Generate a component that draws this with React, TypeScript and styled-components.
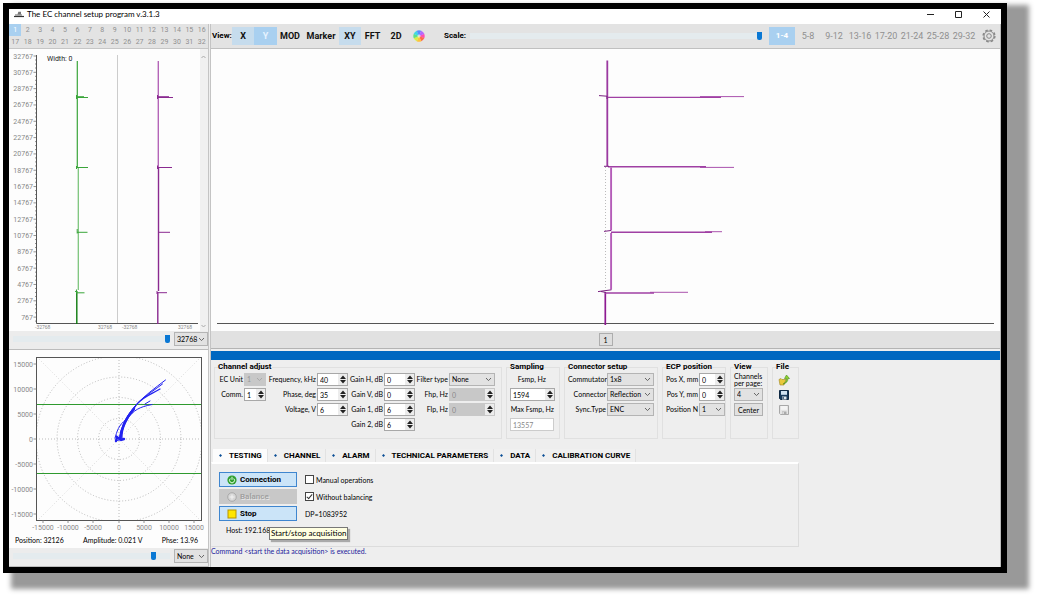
import React, { useId } from "react";
import styled, { createGlobalStyle, css } from "styled-components";

const UI_FONT = 'Lato, "Liberation Sans", sans-serif';
const BOLD_FONT = 'Roboto, "Liberation Sans", sans-serif';

const GlobalStyle = createGlobalStyle`
  *, *::before, *::after { box-sizing: border-box; }
  body { margin: 0; background: #fff; }
  body, button, input, select { font-family: ${UI_FONT}; font-size: 7px; color: #000; }
  svg { display: block; }
  svg text { font-family: ${BOLD_FONT}; }
`;

/* ---------- window ---------- */

const Page = styled.div`
  padding: 3px 32px 24px 3px;
`;

const Frame = styled.main`
  border: 6px solid #000;
  background: #eee;
  box-shadow: 15px 9px 5px 7px #999;
`;

const TitleBar = styled.header`
  display: flex;
  align-items: center;
  height: 15px;
  padding: 0 1px 5px 5px;
  background: #fff;
`;

const Title = styled.h1`
  flex: 1;
  margin: 0 0 0 3px;
  font-size: 8px;
  font-weight: 400;
  line-height: 10px;
`;

const WindowButton = styled.button`
  width: 28px;
  height: 10px;
  padding: 0;
  border: 0;
  background: none;
  display: grid;
  place-items: center;
`;

const Workspace = styled.div`
  display: grid;
  grid-template-columns: 202px minmax(0, 1fr);
`;

const Column = styled.div<{ $divider?: boolean }>`
  display: flex;
  flex-direction: column;
  min-width: 0;
  ${(p) =>
    p.$divider
      ? css`border-right: 3px double #c4c4c4;`
      : css`border-right: 1px solid #bdbdbd;`}
`;

/* ---------- left column ---------- */

const ChannelGrid = styled.nav`
  display: grid;
  grid-template-columns: repeat(16, 1fr);
  grid-auto-rows: 12px;
  height: 25px;
  background: #e3e3e3;
  border-bottom: 1px solid #c6c6c6;
`;

const ChannelButton = styled.button<{ $active?: boolean }>`
  padding: 0;
  border: 0;
  background: ${(p) => (p.$active ? "#a9d0f0" : "none")};
  color: ${(p) => (p.$active ? "#fff" : "#909090")};
  font-family: ${BOLD_FONT};
  line-height: 12px;
`;

const PlotArea = styled.section`
  background: #fdfdfd;
`;

const SliderRow = styled.div`
  display: flex;
  align-items: center;
  gap: 4px;
  height: 19px;
  padding: 0 0 2px 4px;
  background: #ececec;
  border-bottom: 1px solid #bcbcbc;
`;

const Range = styled.input`
  appearance: none;
  flex: 1;
  min-width: 0;
  height: 10px;
  margin: 0;
  background: transparent;
  &::-webkit-slider-runnable-track {
    height: 8px;
    background: linear-gradient(#e4ebee, #e4ebee) center / 100% 6px no-repeat;
  }
  &::-webkit-slider-thumb {
    appearance: none;
    width: 5px;
    height: 8px;
    background: #0a78d4;
    border-radius: 0 0 2px 2px;
  }
`;

const Readout = styled.div`
  display: flex;
  justify-content: space-between;
  height: 14px;
  padding: 0 10px 0 6px;
  line-height: 12px;
  background: #fdfdfd;
`;

/* ---------- form controls ---------- */

const SelectBox = styled.span<{ $w: number; $tall?: boolean; $muted?: boolean }>`
  display: inline-grid;
  align-items: center;
  width: ${(p) => p.$w}px;
  height: ${(p) => (p.$tall ? 14 : 13)}px;
  background: ${(p) => (p.$muted ? "#c8c8c8" : "#e2e2e2")};
  border: 1px solid ${(p) => (p.$muted ? "#c8c8c8" : "#b4b4b4")};
  & > * { grid-area: 1 / 1; }
  & > svg { justify-self: end; margin-right: 2px; pointer-events: none; opacity: ${(p) => (p.$muted ? 0.3 : 1)}; }
`;

const NativeSelect = styled.select`
  appearance: none;
  width: 100%;
  height: 100%;
  padding: 0 0 0 2px;
  border: 0;
  background: none;
  line-height: 11px;
  &:disabled { color: #999; opacity: 1; }
`;

const SpinBox = styled.span<{ $w: number; $muted?: boolean }>`
  display: inline-flex;
  align-items: stretch;
  width: ${(p) => p.$w}px;
  height: 13px;
  background: ${(p) => (p.$muted ? "#c8c8c8" : "#fff")};
  border: 1px solid ${(p) => (p.$muted ? "#c8c8c8" : "#a8a8a8")};
`;

const SpinInput = styled.input`
  flex: 1;
  width: 0;
  min-width: 0;
  padding: 0 0 0 2px;
  border: 0;
  background: none;
  &:disabled { color: #888; }
`;

const SpinButtons = styled.span`
  display: grid;
  grid-template-rows: 1fr 1fr;
  width: 9px;
  background: #ececec;
`;

const SpinButton = styled.button`
  display: grid;
  place-items: center;
  padding: 0;
  border: 0;
  background: none;
`;

const TextBox = styled.input`
  width: 44px;
  height: 13px;
  padding: 0 2px;
  border: 1px solid #ccc;
  background: #fff;
  color: #888;
`;

const Chevron = () => (
  <svg width="7" height="5" viewBox="0 0 7 5" fill="none" stroke="#666">
    <path d="M1 1l2.5 2.6L6 1" />
  </svg>
);

function Select({ id, label, value, w, tall, muted }: { id?: string; label?: string; value: string; w: number; tall?: boolean; muted?: boolean }) {
  return (
    <SelectBox $w={w} $tall={tall} $muted={muted}>
      <NativeSelect id={id} aria-label={label} defaultValue={value} disabled={muted}>
        <option>{value}</option>
      </NativeSelect>
      <Chevron />
    </SelectBox>
  );
}

function Spin({ id, value, w, muted }: { id: string; value: string; w: number; muted?: boolean }) {
  return (
    <SpinBox $w={w} $muted={muted}>
      <SpinInput id={id} defaultValue={value} disabled={muted} inputMode="numeric" />
      <SpinButtons>
        <SpinButton aria-label="Increase">
          <svg width="6" height="4" viewBox="0 0 6 4"><path d="M0 4L3 0.5L6 4z" fill="#222" /></svg>
        </SpinButton>
        <SpinButton aria-label="Decrease">
          <svg width="6" height="4" viewBox="0 0 6 4"><path d="M0 0L3 3.5L6 0z" fill="#222" /></svg>
        </SpinButton>
      </SpinButtons>
    </SpinBox>
  );
}

const FieldRow = styled.div`
  display: flex;
  align-items: center;
  gap: 1px;
  height: 13px;
`;

const FieldLabel = styled.label<{ $w: number }>`
  width: ${(p) => p.$w}px;
  text-align: right;
  white-space: nowrap;
  line-height: 13px;
`;

type FieldProps = { label: string; value: string; lw: number; w: number; kind?: "spin" | "select"; muted?: boolean };

function Field({ label, value, lw, w, kind = "spin", muted }: FieldProps) {
  const id = useId();
  return (
    <FieldRow>
      <FieldLabel htmlFor={id} $w={lw}>{label}</FieldLabel>
      {kind === "spin" ? <Spin id={id} value={value} w={w} muted={muted} /> : <Select id={id} value={value} w={w} muted={muted} />}
    </FieldRow>
  );
}

/* ---------- right column ---------- */

const Toolbar = styled.div`
  display: flex;
  align-items: center;
  height: 25px;
  padding: 0 0 1px 1px;
  background: #e3e3e3;
  border-bottom: 1px solid #c0c0c0;
`;

const ToolLabel = styled.label<{ $w: number }>`
  width: ${(p) => p.$w}px;
  font-family: ${BOLD_FONT};
  font-size: 8px;
  font-weight: 700;
`;

const ToolButton = styled.button<{ $w: number; $state?: "on" | "hot" }>`
  display: grid;
  place-items: center;
  flex: none;
  width: ${(p) => p.$w}px;
  height: 18px;
  padding: 0;
  border: 0;
  background: ${(p) => (p.$state === "hot" ? "#a9d0f0" : p.$state === "on" ? "#c6dced" : "none")};
  color: ${(p) => (p.$state === "hot" ? "#e6f3ff" : "#111")};
  font-family: ${BOLD_FONT};
  font-size: 9px;
  font-weight: 700;
`;

const ScaleGroup = styled.div`
  display: flex;
  flex: 1;
  align-items: center;
  min-width: 0;
  padding: 0 7px 0 15px;
`;

const PageButton = styled.button<{ $active?: boolean }>`
  flex: none;
  width: 26px;
  height: 18px;
  padding: 0;
  border: 0;
  background: ${(p) => (p.$active ? "#a9d0f0" : "none")};
  color: ${(p) => (p.$active ? "#fff" : "#909090")};
  font-family: ${BOLD_FONT};
  font-size: ${(p) => (p.$active ? 8 : 9)}px;
  font-weight: ${(p) => (p.$active ? 700 : 400)};
`;

const ChannelStrip = styled.div`
  display: grid;
  place-items: center;
  height: 18px;
  background: #e1e1e1;
  border-bottom: 1px solid #b4b4b4;
`;

const StripButton = styled.button`
  width: 14px;
  height: 13px;
  padding: 0;
  border: 1px solid #adadad;
  background: #dedede;
`;

const BlueBar = styled.div`
  height: 9px;
  margin-top: 2px;
  background: #0067c0;
`;

const Settings = styled.div`
  display: flex;
  align-items: stretch;
  gap: 4px;
  height: 79px;
  padding: 2px 3px 0;
`;

const Group = styled.fieldset<{ $w: number }>`
  width: ${(p) => p.$w}px;
  min-width: 0;
  margin: 0;
  padding: 1px 0 0 3px;
  border: 1px solid #e0e0e0;
  legend {
    padding: 0;
    font-family: ${BOLD_FONT};
    font-size: 8px;
    font-weight: 700;
    line-height: 10px;
    white-space: nowrap;
  }
`;

const FieldColumns = styled.div`
  display: flex;
`;

const Stack = styled.div`
  display: flex;
  flex-direction: column;
  gap: 2px;
  align-items: flex-start;
  line-height: 13px;
`;

const ViewStack = styled.div`
  display: grid;
  justify-items: start;
  gap: 2px;
`;

const ViewLabel = styled.label`
  height: 13px;
  line-height: 7px;
  white-space: nowrap;
`;

const SmallButton = styled.button`
  width: 29px;
  height: 13px;
  padding: 0;
  border: 1px solid #b0b0b0;
  background: #e1e1e1;
`;

const FileButton = styled.button`
  display: grid;
  place-items: center;
  width: 16px;
  height: 13px;
  padding: 0;
  border: 0;
  background: none;
`;

const Tabs = styled.div`
  display: flex;
  height: 13px;
  margin: 10px 0 0 2px;
`;

const Tab = styled.button<{ $active?: boolean }>`
  display: flex;
  align-items: center;
  gap: 7px;
  padding: 0 5px 0 6px;
  border: 0;
  border-right: 1px solid #e2e2e2;
  background: ${(p) => (p.$active ? "#fcfcfc" : "#f0f0f0")};
  font-family: ${BOLD_FONT};
  font-size: 8px;
  font-weight: 700;
  white-space: nowrap;
`;

const TabPanel = styled.section`
  width: 588px;
  height: 85px;
  padding: 8px 0 0 7px;
  border: 1px solid #dcdcdc;
  border-top: 2px solid #fff;
  border-left-color: #eee;
`;

const ActionGrid = styled.div`
  display: grid;
  grid-template-columns: 78px auto;
  grid-auto-rows: 15px;
  gap: 2px 8px;
  align-items: center;
`;

const ActionButton = styled.button`
  display: flex;
  align-items: center;
  gap: 3px;
  height: 15px;
  padding: 0 7px;
  border: 1px solid #3f86cf;
  background: #cbe4f8;
  font-family: ${BOLD_FONT};
  font-size: 8px;
  font-weight: 700;
  &:disabled {
    border-color: #c8c8c8;
    background: #c8c8c8;
    color: #a2a2a2;
    text-shadow: 1px 1px 0 #e4e4e4;
  }
`;

const CheckLabel = styled.label`
  display: flex;
  align-items: center;
  gap: 2px;
`;

const Check = styled.input`
  appearance: none;
  display: grid;
  place-items: center;
  width: 9px;
  height: 9px;
  margin: 0;
  border: 1px solid #444;
  background: #fff;
  &:checked::after {
    content: "";
    width: 3px;
    height: 6px;
    margin-bottom: 2px;
    border: solid #333;
    border-width: 0 1px 1px 0;
    transform: rotate(40deg);
  }
`;

const HostLine = styled.div`
  position: relative;
  margin-top: 4px;
  padding-left: 7px;
  line-height: 10px;
`;

const Tooltip = styled.span`
  position: absolute;
  left: 50px;
  top: 2px;
  padding: 0 1px;
  border: 1px solid #777;
  background: #ffffe1;
  box-shadow: 2px 2px 1px #aaa;
  font-size: 8px;
  line-height: 11px;
  white-space: nowrap;
`;

const Status = styled.p`
  margin: 0;
  height: 19px;
  line-height: 9px;
  color: #1c1c9c;
`;

/* ---------- drawings ---------- */

const FRAME = "#555";
const DOT = { stroke: "#aaa", strokeWidth: 0.8, strokeDasharray: "1 2", fill: "none" };

function StripChart() {
  const step = 16.32;
  const labels = Array.from({ length: 17 }, (_, i) => 32767 - i * 2000);
  return (
    <svg width="100%" viewBox="9 49 199 282" role="img" aria-label="Channel strips">
      <rect x="200" y="49" width="8" height="282" fill="#f0f0f0" />
      <path d="M201.500 58l2-2 2 2M201.500 325l2 2 2-2" fill="none" stroke="#aaa" />
      {labels.map((v, i) => (
        <g key={v}>
          <text x="33" y={58.500 + i * step} fontSize="7" fill="#888" textAnchor="end">{v}</text>
          <path d={`M33.500 ${56 + i * step}h3M35 ${60 + i * step}h1.500${i < 16 ? `M35 ${64 + i * step}h1.500M35 ${68 + i * step}h1.500` : ""}`} stroke="#777" strokeWidth="0.8" />
        </g>
      ))}
      <path d="M36.500 55V323.500H198" fill="none" stroke={FRAME} />
      <path d="M117.500 55V323" stroke="#ccc" />
      <text x="47" y="61" fontSize="7" fill="#222">Width:  0</text>
      <g fontSize="5" fill="#888">
        <text x="35" y="329">-32768</text>
        <text x="98" y="329">32768</text>
        <text x="122" y="329">-32768</text>
        <text x="178" y="329">32768</text>
      </g>
      <g fill="none" stroke="#3aa53a">
        <path d="M77.300 61V167" strokeWidth="1.2" />
        <path d="M78.300 168V290" stroke="#7cc47c" strokeWidth="1.3" />
        <path d="M76.800 291V324" stroke="#0c7a0c" strokeWidth="1.4" />
        <path d="M76.500 95V99M76.500 96.700H84M77 97.500H88M76.500 166V169M77 167.500H88M77.200 229V233.500M77 232.300H87.500M76.500 289.500V293.500M75 291L77 292.800H84.500" />
      </g>
      <g fill="none" stroke="#8a2a90">
        <path d="M158.300 61V167" stroke="#b465b8" strokeWidth="1.4" />
        <path d="M158.500 168V291" strokeWidth="1.4" />
        <path d="M157.800 292V324" strokeWidth="1.4" />
        <path d="M157.500 95V99M158 96.700H169M158 97.500H173M157 167.500H172M157.500 165.500V169M158 232.300H170M157 292.700H167M157 291V294" />
      </g>
    </svg>
  );
}

function XYPlot() {
  const ys: [string, number][] = [["15000", 364], ["10000", 389], ["5000", 414], ["0", 439], ["-5000", 464], ["-10000", 489], ["-15000", 514]];
  const xs: [string, number][] = [["-15000", 43], ["-10000", 68], ["-5000", 93], ["0", 119], ["5000", 144], ["10000", 169], ["15000", 194]];
  return (
    <svg width="100%" viewBox="9 350 199 184" role="img" aria-label="XY plane">
      <defs>
        <clipPath id="xy"><rect x="36" y="357" width="166" height="164" /></clipPath>
      </defs>
      <g clipPath="url(#xy)" {...DOT}>
        {[20.500, 41.500, 62, 83].map((r) => <circle key={r} cx="119" cy="439" r={r} />)}
        <path d="M36 439H201M119 357V520" />
        <path d="M37 357L201 521M201 357L37 521" stroke="#d0d0d0" />
      </g>
      <rect x="37" y="404" width="164" height="1" fill="#2f9a2f" />
      <rect x="37" y="473" width="164" height="1" fill="#2f9a2f" />
      <rect x="36.500" y="357.500" width="165" height="163" fill="none" stroke={FRAME} />
      {ys.map(([t, y]) => (
        <g key={t}>
          <path d={`M33.500 ${y}h3`} stroke="#777" strokeWidth="0.8" />
          <text x="33" y={y + 2.500} fontSize="7" fill="#888" textAnchor="end">{t}</text>
        </g>
      ))}
      {xs.map(([t, x]) => (
        <g key={t}>
          <path d={`M${x} 520v3`} stroke="#777" strokeWidth="0.8" />
          <text x={x} y="530" fontSize="7" fill="#888" textAnchor="middle">{t}</text>
        </g>
      ))}
      <g fill="none" stroke="#2222f0" strokeLinecap="round">
        <path d="M116 441C117 440 121 440 121 439C120 428 126 416 136 405C144 396 155 388 165.500 380" strokeWidth="1" />
        <path d="M119 440C121 425 129 412 138 403C146 395 156 389 162.500 384" strokeWidth="1" />
        <path d="M122 439C121 428 128 417 137 404C144 396 152 394 160 389" strokeWidth="1.2" />
        <path d="M115 438C117 432 118 425 127 419C134 410 139 407 152 404.500M145 404L150 401" />
        <path d="M120.500 438C121 427 127 417 134 409M116 441L117 437L121 440L124 439" strokeWidth="2.4" />
      </g>
    </svg>
  );
}

function MainChart() {
  return (
    <svg width="100%" height="282" viewBox="211 49 789 282" preserveAspectRatio="none" role="img" aria-label="Y component">
      <path d="M217 323.500H994" stroke={FRAME} />
      <path d="M605.500 167V290" {...DOT} />
      <g fill="none" stroke="#a040a4">
        <path d="M607.300 60.500V166" stroke="#9b3aa0" strokeWidth="1.8" />
        <path d="M611.100 167.500V230.500M611.100 233V289.500" stroke="#b45cb8" strokeWidth="1.9" />
        <path d="M605.300 292V325" stroke="#8e1a92" strokeWidth="1.7" />
        <path d="M607 97.400H721M608 166.800H706M611 232.300H712M605 293H654" strokeWidth="1.4" />
        <path d="M700 96.600H744M700 167.400H734M705 231.700H722M650 292.300H688" strokeWidth="0.9" />
        <path d="M599 95.600L607 96.200V99M604 166.300H609M604 231.400L611 230.500M598 291.600L611.500 289.800M601 291.500L606 292.500" stroke="#7a2080" />
      </g>
    </svg>
  );
}

const AppIcon = () => (
  <svg width="10" height="8" viewBox="0 0 10 8">
    <path d="M0 6.500h10" stroke="#333" strokeWidth="1.200" />
    <path d="M3.500 4.500l.8-2.800h2.700v2.800z" fill="#777" />
    <path d="M1 5h7" stroke="#666" />
  </svg>
);

const ColourWheel = () => (
  <svg width="12" height="12" viewBox="-6 -6 12 12">
    {["#ff4fb0", "#ff6a4a", "#ffc23e", "#d8ee4a", "#5fe08a", "#3fd6e8", "#5a8cff", "#b468ff"].map((c, i) => (
      <path key={c} d="M0 0L-2.300 -5.200A5.700 5.700 0 0 1 2.300 -5.200z" fill={c} transform={`rotate(${i * 45 + 90})`} />
    ))}
    <circle r="1.500" fill="#fff" opacity="0.5" />
  </svg>
);

const Gear = () => (
  <svg width="14" height="14" viewBox="-7 -7 14 14" fill="none" stroke="#888">
    <circle r="5.900" strokeWidth="1.400" strokeDasharray="2.600 2.030" />
    <circle r="5" />
    <circle r="2.300" />
  </svg>
);

const PowerIcon = () => (
  <svg width="10" height="10" viewBox="0 0 10 10">
    <circle cx="5" cy="5" r="4.600" fill="#2f9e2f" />
    <path d="M3.300 3.500a2.500 2.500 0 1 0 3.400 0M5 1.800v3" fill="none" stroke="#e8ffe8" />
  </svg>
);

const BalanceIcon = () => (
  <svg width="10" height="10" viewBox="0 0 10 10">
    <circle cx="5" cy="5" r="4.300" fill="#d6d6d6" stroke="#aaa" />
    <path d="M2.500 5h5M5 2.500v5" stroke="#f2f2f2" />
  </svg>
);

const StopIcon = () => (
  <svg width="10" height="10" viewBox="0 0 10 10">
    <rect x="1" y="1" width="8" height="8" fill="#ffe600" stroke="#b89400" />
  </svg>
);

const OpenIcon = () => (
  <svg width="12" height="12" viewBox="0 0 12 12">
    <path d="M1 5.500l2-1 1 1h4l-2 5.500H2z" fill="#e9c93c" stroke="#9d8420" strokeWidth="0.6" />
    <path d="M5 10c2.500-1 3.500-3 3.500-5.500H6.500L8.500 1 11.500 4.500H10c0 3-2 5-5 5.500z" fill="#8fd42e" stroke="#4c8a1c" strokeWidth="0.6" />
  </svg>
);

const FloppyIcon = ({ muted }: { muted?: boolean }) => (
  <svg width="10" height="10" viewBox="0 0 10 10">
    <path d="M.5.500h9v9h-8l-1-1z" fill={muted ? "#e4e4e4" : "#173a5c"} stroke={muted ? "#a8a8a8" : "#102a44"} />
    <rect x="2" y="1" width="6" height="3.800" fill={muted ? "#f4f4f4" : "#cfe2f2"} />
    <rect x="3" y="6.500" width="4.500" height="3" fill={muted ? "#aaa" : "#dfe8ef"} />
    <rect x="3.500" y="7" width="1.200" height="2" fill={muted ? "#eee" : "#173a5c"} />
  </svg>
);

const TabDot = () => (
  <svg width="3" height="3" viewBox="0 0 3 3"><path d="M1.500 0L3 1.500 1.500 3 0 1.500z" fill="#0b4f96" /></svg>
);

/* ---------- app ---------- */

const pages = ["1-4", "5-8", "9-12", "13-16", "17-20", "21-24", "25-28", "29-32"];
const tabs = ["TESTING", "CHANNEL", "ALARM", "TECHNICAL PARAMETERS", "DATA", "CALIBRATION CURVE"];

export default function App() {
  return (
    <Page>
      <GlobalStyle />
      <Frame>
        <TitleBar>
          <AppIcon />
          <Title>The EC channel setup program v.3.1.3</Title>
          <WindowButton aria-label="Minimize">
            <svg width="7" height="7" stroke="#222"><path d="M0 3.500h7" /></svg>
          </WindowButton>
          <WindowButton aria-label="Maximize">
            <svg width="7" height="7" stroke="#222" fill="none"><path d="M.5.500h6v6h-6z" /></svg>
          </WindowButton>
          <WindowButton aria-label="Close">
            <svg width="7" height="7" stroke="#222"><path d="M.5.500l6 6M6.500.500l-6 6" /></svg>
          </WindowButton>
        </TitleBar>
        <Workspace>
          <Column $divider>
            <ChannelGrid aria-label="Channels">
              {Array.from({ length: 32 }, (_, i) => (
                <ChannelButton key={i} $active={i === 0}>{i + 1}</ChannelButton>
              ))}
            </ChannelGrid>
            <PlotArea><StripChart /></PlotArea>
            <SliderRow>
              <Range type="range" aria-label="Strip width" defaultValue={100} />
              <Select label="Strip width" value="32768" w={34} tall />
            </SliderRow>
            <PlotArea><XYPlot /></PlotArea>
            <Readout>
              <span>Position: 32126</span>
              <span>Amplitude: 0.021 V</span>
              <span>Phse: 13.96</span>
            </Readout>
            <SliderRow>
              <Range type="range" aria-label="XY zoom" defaultValue={91} />
              <Select label="XY filter" value="None" w={34} tall />
            </SliderRow>
          </Column>
          <Column>
            <Toolbar>
              <ToolLabel as="span" $w={20}>View:</ToolLabel>
              <ToolButton $w={22} $state="on">X</ToolButton>
              <ToolButton $w={23} $state="hot">Y</ToolButton>
              <ToolButton $w={26}>MOD</ToolButton>
              <ToolButton $w={36}>Marker</ToolButton>
              <ToolButton $w={22} $state="on">XY</ToolButton>
              <ToolButton $w={23}>FFT</ToolButton>
              <ToolButton $w={24}>2D</ToolButton>
              <ToolButton $w={21} aria-label="Colours"><ColourWheel /></ToolButton>
              <ScaleGroup>
                <ToolLabel htmlFor="scale" $w={26}>Scale:</ToolLabel>
                <Range id="scale" type="range" defaultValue={100} />
              </ScaleGroup>
              {pages.map((p, i) => <PageButton key={p} $active={i === 0}>{p}</PageButton>)}
              <ToolButton $w={23} aria-label="Settings"><Gear /></ToolButton>
            </Toolbar>
            <PlotArea><MainChart /></PlotArea>
            <ChannelStrip><StripButton>1</StripButton></ChannelStrip>
            <BlueBar />
            <Settings>
              <Group $w={288}>
                <legend>Channel adjust</legend>
                <FieldColumns>
                  <Stack>
                    <Field label="EC Unit" value="1" lw={25} w={22} kind="select" muted />
                    <Field label="Comm." value="1" lw={25} w={22} />
                  </Stack>
                  <Stack>
                    <Field label="Frequency, kHz" value="40" lw={50} w={31} />
                    <Field label="Phase, deg" value="35" lw={50} w={31} />
                    <Field label="Voltage, V" value="6" lw={50} w={31} />
                  </Stack>
                  <Stack>
                    <Field label="Gain H, dB" value="0" lw={35} w={31} />
                    <Field label="Gain V, dB" value="0" lw={35} w={31} />
                    <Field label="Gain 1, dB" value="6" lw={35} w={31} />
                    <Field label="Gain 2, dB" value="6" lw={35} w={31} />
                  </Stack>
                  <Stack>
                    <Field label="Filter type" value="None" lw={33} w={46} kind="select" />
                    <Field label="Fhp, Hz" value="0" lw={33} w={46} muted />
                    <Field label="Flp, Hz" value="0" lw={33} w={46} muted />
                  </Stack>
                </FieldColumns>
              </Group>
              <Group $w={54}>
                <legend>Sampling</legend>
                <Stack>
                  <FieldLabel htmlFor="fsmp" $w={36}>Fsmp, Hz</FieldLabel>
                  <Spin id="fsmp" value="1594" w={45} />
                  <FieldLabel htmlFor="maxfsmp" $w={44}>Max Fsmp, Hz</FieldLabel>
                  <TextBox id="maxfsmp" defaultValue="13557" readOnly />
                </Stack>
              </Group>
              <Group $w={94}>
                <legend>Connector setup</legend>
                <Stack>
                  <Field label="Commutator" value="1x8" lw={38} w={47} kind="select" />
                  <Field label="Connector" value="Reflection" lw={38} w={47} kind="select" />
                  <Field label="Sync.Type" value="ENC" lw={38} w={47} kind="select" />
                </Stack>
              </Group>
              <Group $w={64}>
                <legend>ECP position</legend>
                <Stack>
                  <Field label="Pos X, mm" value="0" lw={32} w={26} />
                  <Field label="Pos Y, mm" value="0" lw={32} w={26} />
                  <Field label="Position N" value="1" lw={32} w={26} kind="select" />
                </Stack>
              </Group>
              <Group $w={38}>
                <legend>View</legend>
                <ViewStack>
                  <ViewLabel htmlFor="perpage">Channels<br />per page:</ViewLabel>
                  <Select id="perpage" value="4" w={29} />
                  <SmallButton>Center</SmallButton>
                </ViewStack>
              </Group>
              <Group $w={27}>
                <legend>File</legend>
                <Stack>
                  <FileButton aria-label="Open"><OpenIcon /></FileButton>
                  <FileButton aria-label="Save"><FloppyIcon /></FileButton>
                  <FileButton aria-label="Save as" disabled><FloppyIcon muted /></FileButton>
                </Stack>
              </Group>
            </Settings>
            <Tabs role="tablist">
              {tabs.map((t, i) => (
                <Tab key={t} role="tab" aria-selected={i === 0} $active={i === 0}><TabDot />{t}</Tab>
              ))}
            </Tabs>
            <TabPanel>
              <ActionGrid>
                <ActionButton><PowerIcon />Connection</ActionButton>
                <CheckLabel><Check type="checkbox" />Manual operations</CheckLabel>
                <ActionButton disabled><BalanceIcon />Balance</ActionButton>
                <CheckLabel><Check type="checkbox" defaultChecked />Without balancing</CheckLabel>
                <ActionButton><StopIcon />Stop</ActionButton>
                <span>DP=1083952</span>
              </ActionGrid>
              <HostLine>
                Host: 192.168
                <Tooltip role="tooltip">Start/stop acquisition</Tooltip>
              </HostLine>
            </TabPanel>
            <Status>Command &lt;start the data acquisition&gt; is executed.</Status>
          </Column>
        </Workspace>
      </Frame>
    </Page>
  );
}
